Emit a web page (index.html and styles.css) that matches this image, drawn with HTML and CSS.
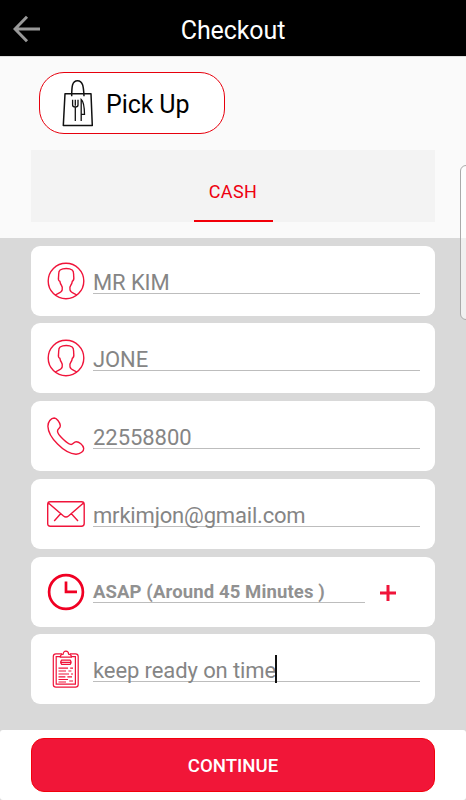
FILE: index.html
```html
<!DOCTYPE html>
<html lang="en">
<head>
<meta charset="utf-8">
<title>Checkout</title>
<link rel="stylesheet" href="styles.css">
</head>
<body>
<svg class="defs" width="0" height="0">
  <symbol id="person" viewBox="0 0 38 38">
    <circle cx="19" cy="19" r="17.8"/>
    <path d="M8.3 33.2C10 31.5 14.6 31 15.2 27.8C15.5 26 15.4 24.6 14.4 23.3C13.4 22 13.1 20.7 12.9 19.3C11.4 18.7 11.2 17.2 11.5 15.3C12 12 11 9.6 13.1 8C16.2 6 22.4 6 25.2 8C27.3 9.6 26.3 12 26.8 15.3C27 17.2 26.8 18.7 25.3 19.3C25.1 20.7 24.8 22 23.8 23.3C22.8 24.6 22.6 26 23 27.8C23.6 31 28.1 31.5 29.8 33.2"/>
  </symbol>
</svg>
<div class="screen">
  <header class="topbar">
    <svg class="back" viewBox="0 0 28 28"><path d="M27 14H2.5M14 1.8L2 14L14 26.2"/></svg>
    <h1>Checkout</h1>
  </header>
  <section class="options">
    <div class="pickup">
      <svg class="bag" viewBox="0 0 32 48">
        <path class="outline" d="M3 14.7H29L30.3 46.6H1.3ZM9.7 17.3C9.7 8 10 1.7 15.5 1.7S21.6 8 22 17.3"/>
        <path class="cutlery" d="M13.3 28V42M10.6 20.7V26Q10.6 28 13.3 28T16 26V20.7M13.3 20.7V26.8M19.2 42V20.5C21.6 22.5 22.4 29 22.5 35.3H19.2"/>
      </svg>
      <span>Pick Up</span>
    </div>
    <nav class="tabs"><a class="tab">CASH</a></nav>
  </section>
  <main class="form">
    <div class="card">
      <svg class="icon"><use href="#person"/></svg>
      <div class="field"><span class="name">MR KIM</span></div>
    </div>
    <div class="card">
      <svg class="icon"><use href="#person"/></svg>
      <div class="field"><span class="name">JONE</span></div>
    </div>
    <div class="card">
      <svg class="icon" viewBox="0 0 38 38"><path d="M7.2 1C4 1 .8 5 .9 9.2C1.2 20 17 36.8 29 37.2C33.5 37.2 37 34 36.7 31.3C36.2 28 32 24.7 29.3 24.7C26.4 24.7 26.2 27.8 23.7 27.4C19.8 26.6 10.6 17.6 10.5 14.2C10.5 11.6 13.8 11.4 13.3 8.3C12.7 5.2 9.7 1.1 7.2 1Z"/></svg>
      <div class="field"><span class="phone">22558800</span></div>
    </div>
    <div class="card">
      <svg class="icon" viewBox="0 0 38 38"><path d="M3 6.8H34.5Q37.2 6.8 37.2 9.5V28.5Q37.2 31.2 34.5 31.2H3.2Q.7 31.2 .7 28.5V9.5Q.7 6.8 3 6.8ZM1.4 8L16.5 21Q19 23 21.5 21L36.5 8M13.6 18.8L7.2 26M24.4 18.8L31 26"/></svg>
      <div class="field"><span class="email">mrkimjon@gmail.com</span></div>
    </div>
    <div class="card">
      <svg class="icon clock" viewBox="0 0 38 38"><circle cx="19" cy="19" r="16.9"/><path d="M19 8.5V18.8H30"/></svg>
      <div class="field time"><span class="slot">ASAP (Around 45 Minutes )</span></div>
      <svg class="plus" viewBox="0 0 16 16"><path d="M8 0V16M0 8H16"/></svg>
    </div>
    <div class="card">
      <svg class="icon board" viewBox="0 0 38 38">
        <path d="M15 3.8H9Q6.3 3.8 6.3 6.5V34.5Q6.3 37.2 9 37.2H28.5Q31.2 37.2 31.2 34.5V6.5Q31.2 3.8 28.5 3.8H23M13.5 6.7H9.2V34.2H28.4V6.7H24.3"/>
        <path d="M13.3 7.2Q13.3 4.2 16.2 4.2C16.2 .1 21.5 .1 21.6 4.2Q24.4 4.2 24.4 7.2ZM14.6 10.2H23.2Q25 12.3 23.2 14.4H14.6Q12.8 12.3 14.6 10.2Z"/>
        <path d="M13.7 12.3H24M11.5 18.2H21M23.2 18.2H26M11.5 21H19M21.4 21H24.4M11.5 24H22M24 24H26M11.5 26.8H18.4M20.4 26.8H25M11.5 29.5H21M11.5 32H19M22.2 31H26"/>
      </svg>
      <div class="field"><span class="note">keep ready on time</span><i class="caret"></i></div>
    </div>
  </main>
  <footer class="bottom"><button>CONTINUE</button></footer>
  <div class="edge-handle"></div>
</div>
</body>
</html>
```
FILE: styles.css
```css
* { box-sizing: border-box; }
body { margin: 0; font-family: Roboto, "Liberation Sans", sans-serif; }
.defs { position: absolute; }
svg { fill: none; flex: none; }
.screen {
  position: relative;
  width: 466px;
  height: 800px;
  overflow: hidden;
  display: flex;
  flex-direction: column;
  background: #d9d9d9;
}
.topbar {
  height: 56px;
  flex: none;
  background: #000;
  display: grid;
  grid-template-columns: 42px 1fr 42px;
  align-items: center;
  padding-top: 4px;
}
.back { width: 28px; height: 28px; margin: -2px 0 0 13px; stroke: #999; stroke-width: 3; }
h1 { margin: 2px 0 0; text-align: center; color: #fff; font-size: 25px; line-height: 30px; font-weight: 400; letter-spacing: -.1px; }
.options {
  height: 182px;
  flex: none;
  background: #fafafa;
  border-top: 1px solid #ddd;
  padding: 15px 31px 0;
}
.pickup {
  width: 186px;
  height: 62px;
  margin-left: 8px;
  border: 1.4px solid #e7000d;
  border-radius: 25px;
  background: #fff;
  display: flex;
  align-items: center;
  padding-left: 22px;
  font-size: 25px;
  letter-spacing: -.1px;
  color: #000;
}
.pickup span { margin-top: 3px; }
.bag { width: 32px; height: 48px; margin-right: 12px; stroke: #111; }
.outline { stroke-width: 1.5; stroke-linejoin: round; }
.cutlery { stroke-width: 1.3; }
.tabs { height: 72px; margin-top: 16px; background: #f3f3f3; display: flex; justify-content: center; }
.tab {
  width: 79px;
  border-bottom: 2px solid #f20009;
  color: #ee0010;
  font-size: 18px;
  font-weight: 400;
  letter-spacing: .35px;
  line-height: 84px;
  text-align: center;
}
.form {
  flex: 1;
  padding: 7.5px 31px 0;
  display: flex;
  flex-direction: column;
  gap: 7.8px;
}
.card {
  height: 70px;
  flex: none;
  border-radius: 9px;
  background: #fff;
  display: flex;
  align-items: center;
  padding: 0 15px 0 16px;
}
.icon { width: 38px; height: 38px; margin-right: 8px; stroke: #f0143a; stroke-width: 1.4; }
.clock { stroke: #f00023; stroke-width: 2.7; }
.board { stroke-width: 1.2; }
.field {
  flex: 1;
  height: 26px;
  border-bottom: 1px solid #bdbdbd;
  display: flex;
  color: #858585;
  font-size: 22px;
  line-height: 29px;
  white-space: nowrap;
}
.name { letter-spacing: -.1px; }
.phone { letter-spacing: -.05px; }
.email { letter-spacing: -.18px; }
.note { letter-spacing: -.1px; }
.field.time { flex: none; width: 272px; height: 24px; margin-top: -2px; font-size: 18.5px; line-height: 27px; font-weight: 700; color: #919191; }
.slot { letter-spacing: .12px; }
.plus { width: 16px; height: 16px; margin: 2px 0 0 15px; stroke: #f0143a; stroke-width: 3; }
.caret { width: 2px; height: 28px; background: #111; margin: -1px 0 0 -1px; flex: none; }
.bottom { height: 70px; flex: none; background: #fff; border-radius: 3px; padding: 8px 31px; }
button {
  width: 100%;
  height: 54px;
  padding: 2px 0 0;
  border: 1px solid #f3000c;
  border-radius: 13px;
  background: #f11638;
  color: #fff;
  font: 500 18.6px Roboto, sans-serif;
}
.edge-handle {
  position: absolute;
  left: 460px;
  top: 165px;
  width: 20px;
  height: 155px;
  border: 1px solid #aaa;
  border-radius: 6px;
  background: rgba(255, 255, 255, .6);
}
```
